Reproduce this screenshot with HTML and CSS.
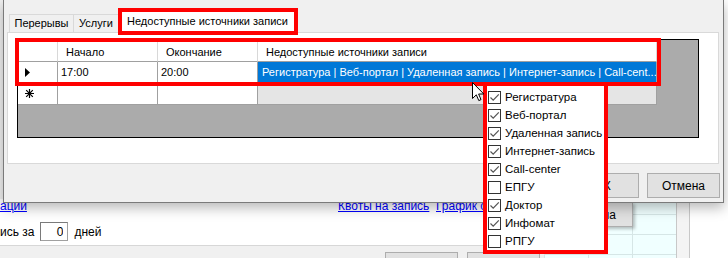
FILE: index.html
```html
<!DOCTYPE html>
<html lang="ru">
<head>
    <meta charset="UTF-8">
    <title>Недоступные источники записи</title>
    <link rel="stylesheet" href="styles.css">
</head>
<body>
<div class="screen">
    <!-- основная форма под диалогом -->
    <div class="form">
        <div class="form-main">
            <div class="form-top"></div>
            <div class="links">
                <a href="#">ации</a>
                <a href="#">Квоты на запись</a>
                <a href="#">График отпусков</a>
            </div>
            <div class="days">
                <span>ись за</span>
                <input type="text" class="days-input" value="0">
                <span>дней</span>
            </div>
            <div class="form-bar">
                <button class="bar-btn"></button>
                <button class="bar-btn"></button>
            </div>
        </div>
        <div class="side">
            <div class="cal">
                <button class="cal-btn">Печа</button>
            </div>
            <div class="vbar"></div>
            <div class="side-rest"></div>
        </div>
    </div>

    <!-- диалог -->
    <div class="dialog">
        <div class="tabs">
            <div class="tab">Перерывы</div>
            <div class="tab">Услуги</div>
            <div class="tab active">Недоступные источники записи</div>
        </div>
        <div class="tab-page">
            <div class="grid">
                <div class="grid-row head">
                    <div class="cell rh"></div>
                    <div class="cell c1">Начало</div>
                    <div class="cell c2">Окончание</div>
                    <div class="cell c3">Недоступные источники записи</div>
                </div>
                <div class="grid-row data">
                    <div class="cell rh">
                        <svg width="5" height="9" viewBox="0 0 5 9"><polygon points="0,0 5,4.5 0,9" fill="#000"/></svg>
                    </div>
                    <div class="cell c1">17:00</div>
                    <div class="cell c2">20:00</div>
                    <div class="cell c3 selected">Регистратура | Веб-портал | Удаленная запись | Интернет-запись | Call-cent...</div>
                </div>
                <div class="grid-row new">
                    <div class="cell rh">
                        <svg width="9" height="9" viewBox="0 0 9 9"><path d="M4.5 0V9M0 4.5H9M1.2 1.2L7.8 7.8M7.8 1.2L1.2 7.8" stroke="#000" stroke-width="1.2"/></svg>
                    </div>
                    <div class="cell c1"></div>
                    <div class="cell c2"></div>
                    <div class="cell c3 combo"></div>
                </div>
            </div>
        </div>
        <div class="dialog-buttons">
            <button class="btn">ОК</button>
            <button class="btn">Отмена</button>
        </div>
    </div>

    <!-- выпадающий список -->
    <div class="popup">
        <div class="item"><span class="box on"></span>Регистратура</div>
        <div class="item"><span class="box on"></span>Веб-портал</div>
        <div class="item"><span class="box on"></span>Удаленная запись</div>
        <div class="item"><span class="box on"></span>Интернет-запись</div>
        <div class="item"><span class="box on"></span>Call-center</div>
        <div class="item"><span class="box"></span>ЕПГУ</div>
        <div class="item"><span class="box on"></span>Доктор</div>
        <div class="item"><span class="box on"></span>Инфомат</div>
        <div class="item"><span class="box"></span>РПГУ</div>
    </div>

    <!-- красные пометки -->
    <div class="mark mark-tab"></div>
    <div class="mark mark-grid"></div>

    <svg class="cursor" width="13" height="20" viewBox="0 0 13 20">
        <path d="M0.5 0.5V16.5L4.3 12.8L6.8 18.6L9 17.6L6.6 12H11.8Z" fill="#fff" stroke="#000" stroke-width="1"/>
    </svg>
</div>
</body>
</html>
```

FILE: styles.css
```css
/* окно 728x258 */
body {
    margin: 0;
    font-family: "Liberation Sans", Arial, sans-serif;
    font-size: 11px;
    color: #000;
}
.screen {
    position: relative;
    width: 728px;
    height: 258px;
    overflow: hidden;
    background: #fff;
}

/* форма под диалогом */
.form {
    display: flex;
    height: 258px;
}
.form-main {
    width: 544px;
    display: flex;
    flex-direction: column;
}
.form-main > div {
    flex-shrink: 0;
}
.form-top {
    height: 199px;
    background: #f0f0f0;
}
.links {
    display: grid;
    grid-template-columns: 338px 98px auto;
    height: 14px;
    line-height: 15px;
    font-size: 12px;
}
.links a {
    color: #0000ff;
    white-space: nowrap;
}
.days {
    display: flex;
    align-items: center;
    gap: 6px;
    height: 19px;
    margin-top: 9px;
    margin-bottom: 4px;
    font-size: 12px;
}
.days-input {
    width: 28px;
    height: 19px;
    box-sizing: border-box;
    border: 1px solid #a0a0a0;
    border-top-color: #7a7a7a;
    border-left-color: #7a7a7a;
    padding: 0 4px;
    font: inherit;
    text-align: right;
}
.form-bar {
    flex: 1;
    display: flex;
    gap: 9px;
    padding: 6px 0 0 385px;
    border-top: 1px solid #d7d7d7;
    background: #f0f0f0;
    overflow: hidden;
}
.bar-btn {
    flex-shrink: 0;
    width: 73px;
    height: 25px;
    background: #e1e1e1;
    border: 1px solid #adadad;
}
.side {
    flex: 1;
    display: flex;
}
.cal {
    width: 132px;
    background-color: #f0ffff;
    background-image:
        linear-gradient(#d6e6e6 1px, transparent 1px),
        linear-gradient(90deg, #d6e6e6 1px, transparent 1px);
    background-size: 44px 20px;
    background-position: 0 14px;
}
.cal-btn {
    display: block;
    width: 73px;
    height: 25px;
    margin: 202px 0 0 16px;
    padding: 0 16px 0 0;
    text-align: right;
    background: #e1e1e1;
    border: 1px solid #adadad;
    font: inherit;
    font-size: 12px;
    box-shadow: 2px 2px 3px rgba(0, 0, 0, 0.25);
}
.vbar {
    width: 12px;
    background: #f4f4f4;
    border-left: 1px solid #c8c8c8;
    border-right: 1px solid #c8c8c8;
}
.side-rest {
    flex: 1;
    background: #fff;
}

/* диалог */
.dialog {
    position: absolute;
    left: 3px;
    top: 0;
    width: 721px;
    height: 203px;
    box-sizing: border-box;
    padding-top: 10px;
    background: #f0f0f0;
    border: 1px solid #7a7a7a;
    border-top: none;
    box-shadow: 0 5px 12px rgba(0, 0, 0, 0.28);
}
.tabs {
    display: flex;
    align-items: flex-end;
    height: 22px;
    margin-left: 5px;
}
.tab {
    height: 18px;
    box-sizing: border-box;
    border: 1px solid #d9d9d9;
    border-bottom: none;
    line-height: 17px;
    text-align: center;
    white-space: nowrap;
}
.tab:nth-child(1) { width: 65px; }
.tab:nth-child(2) { width: 46px; margin-left: -1px; }
.tab.active {
    width: 179px;
    height: 23px;
    margin: 0 0 -1px -1px;
    line-height: 21px;
    background: #fff;
    position: relative;
}
.tab-page {
    width: 712px;
    height: 132px;
    box-sizing: border-box;
    margin-left: 3px;
    padding: 6px 0 0 9px;
    background: #fff;
    border: 1px solid #d9d9d9;
}

/* таблица */
.grid {
    width: 682px;
    height: 99px;
    box-sizing: border-box;
    border: 1px solid #000;
    background: #ababab;
}
.grid-row {
    display: flex;
    height: 21px;
}
.grid-row.head,
.grid-row.new {
    height: 22px;
}
.cell {
    box-sizing: border-box;
    border-right: 1px solid #a0a0a0;
    border-bottom: 1px solid #a0a0a0;
    background: #fff;
    white-space: nowrap;
    overflow: hidden;
    display: flex;
    align-items: center;
    padding-left: 3px;
}
.rh { width: 40px; padding-left: 7px; }
.c1, .c2 { width: 100px; }
.c3 { width: 399px; padding-left: 4px; }
.head .c1, .head .c2, .head .c3 { padding-left: 8px; padding-top: 2px; }
.head .cell { border-right-color: #d8d8d8; }
.selected {
    background: #0078d7;
    color: #fff;
}
.combo {
    background: #e5e5e5;
}

/* кнопки диалога */
.dialog-buttons {
    display: flex;
    justify-content: flex-end;
    gap: 8px;
    margin-top: 9px;
    padding-right: 3px;
}
.btn {
    width: 73px;
    height: 25px;
    background: #e1e1e1;
    border: 1px solid #adadad;
    font: inherit;
    font-size: 12px;
}

/* выпадающий список с флажками */
.popup {
    position: absolute;
    left: 483px;
    top: 82px;
    width: 125px;
    box-sizing: border-box;
    padding: 2px 0 0 1px;
    border: 4px solid #f00;
    background: #fff;
    font-size: 11.5px;
}
.item {
    display: flex;
    align-items: center;
    gap: 4px;
    height: 18px;
    white-space: nowrap;
}
.box {
    width: 13px;
    height: 13px;
    box-sizing: border-box;
    border: 1px solid #333;
    background: #fff;
}
.box.on {
    background: #fff url("data:image/svg+xml;utf8,<svg xmlns='http://www.w3.org/2000/svg' width='11' height='11'><path d='M1.5 5.5L4.2 8.2L9.8 2.3' fill='none' stroke='%23555' stroke-width='1.2'/></svg>") no-repeat center;
}

/* красные рамки */
.mark {
    position: absolute;
    border: 4px solid #f00;
    box-sizing: border-box;
}
.mark-tab {
    left: 118px;
    top: 8px;
    width: 180px;
    height: 27px;
}
.mark-grid {
    left: 15px;
    top: 38px;
    width: 646px;
    height: 48px;
}
.cursor {
    position: absolute;
    left: 472px;
    top: 82px;
}
```
